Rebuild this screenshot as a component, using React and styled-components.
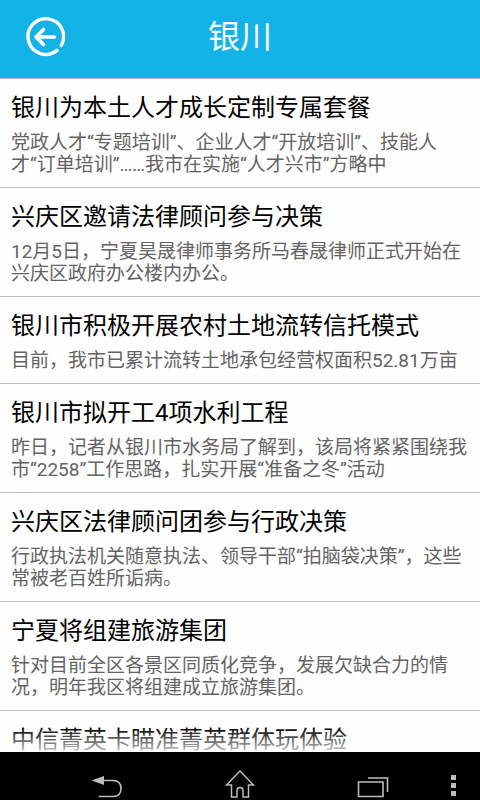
import React from 'react';
import styled, { createGlobalStyle } from 'styled-components';

const news = [
  {
    title: '银川为本土人才成长定制专属套餐',
    summary: '党政人才“专题培训”、企业人才“开放培训”、技能人才“订单培训”……我市在实施“人才兴市”方略中',
  },
  {
    title: '兴庆区邀请法律顾问参与决策',
    summary: '12月5日，宁夏昊晟律师事务所马春晟律师正式开始在兴庆区政府办公楼内办公。',
  },
  {
    title: '银川市积极开展农村土地流转信托模式',
    summary: '目前，我市已累计流转土地承包经营权面积52.81万亩',
  },
  {
    title: '银川市拟开工4项水利工程',
    summary: '昨日，记者从银川市水务局了解到，该局将紧紧围绕我市“2258”工作思路，扎实开展“准备之冬”活动',
  },
  {
    title: '兴庆区法律顾问团参与行政决策',
    summary: '行政执法机关随意执法、领导干部“拍脑袋决策”，这些常被老百姓所诟病。',
  },
  {
    title: '宁夏将组建旅游集团',
    summary: '针对目前全区各景区同质化竞争，发展欠缺合力的情况，明年我区将组建成立旅游集团。',
  },
  { title: '中信菁英卡瞄准菁英群体玩体验' },
];

const App = () => {
  return (
    <Screen>
      <GlobalStyle />
      <Header>
        <BackButton type="button" aria-label="返回">
          <svg width="40" height="40" viewBox="0 0 40 40" fill="none" stroke="#fff" strokeLinecap="round">
            <path d="M36.2 28.5A17.8 17.8 0 1 0 32 33.4" strokeWidth="3.4" />
            <path d="M29.500 20H11.500M18.500 12.500L11 20L18.500 27.500" strokeWidth="3.6" strokeLinejoin="round" />
          </svg>
        </BackButton>
        <HeaderTitle>银川</HeaderTitle>
      </Header>

      <ListArea>
        <List>
          {news.map(item => (
            <Row key={item.title}>
              <RowLink href="#">
                <RowTitle>{item.title}</RowTitle>
                {item.summary && <Summary>{item.summary}</Summary>}
              </RowLink>
            </Row>
          ))}
        </List>
        <Fade />
      </ListArea>

      <NavBar>
        <NavButton type="button" aria-label="后退">
          <svg width="32" height="24" viewBox="0 0 32 24" fill="none" stroke="#bdbdbd">
            <path d="M12 6.500H22C27 6.500 30 9.500 30 14.500C30 19.500 27 22.500 22 22.500H7.500" strokeWidth="1.6" />
            <path d="M0.500 6.500L13 2V11Z" fill="#bdbdbd" stroke="none" />
          </svg>
        </NavButton>
        <NavButton type="button" aria-label="主页">
          <svg width="32" height="30" viewBox="0 0 32 30" fill="none" stroke="#bdbdbd" strokeWidth="1.5">
            <path d="M16 3L2.5 17H7.5V29H13V22C13 18.5 19 18.5 19 22V29H24.5V17H29.5Z" />
          </svg>
        </NavButton>
        <NavButton type="button" aria-label="最近任务">
          <svg width="32" height="24" viewBox="0 0 32 24" fill="none" stroke="#bdbdbd" strokeWidth="1.6">
            <path d="M1.5 8H26V22.5H1.5Z" />
            <path d="M11 4H30.5V18" />
          </svg>
        </NavButton>
        <MenuButton type="button" aria-label="更多">
          <svg width="5" height="22" viewBox="0 0 5 22" fill="#bdbdbd">
            <rect width="5" height="5" />
            <rect y="8" width="5" height="5" />
            <rect y="16" width="5" height="5" />
          </svg>
        </MenuButton>
      </NavBar>
    </Screen>
  );
};

const GlobalStyle = createGlobalStyle`
  * {
    box-sizing: border-box;
  }
  body {
    margin: 0;
    font-family: Roboto, 'Noto Sans CJK SC', sans-serif;
  }
  button {
    border: 0;
    padding: 0;
    background: none;
    cursor: pointer;
  }
  svg {
    display: block;
  }
`;

const Screen = styled.div`
  display: flex;
  flex-direction: column;
  height: 100vh;
  background: #fefefe;
`;

const Header = styled.header`
  display: grid;
  grid-template-columns: 1fr auto 1fr;
  align-items: center;
  height: 79px;
  padding: 0 25px 4px;
  background: #13b2e7;
  border-bottom: 1px solid #a5b4bb;
  flex-shrink: 0;
`;

const BackButton = styled.button`
  justify-self: start;
`;

const HeaderTitle = styled.h1`
  margin: 0;
  color: #fff;
  font-size: 32px;
  font-weight: 400;
  line-height: 40px;
`;

const ListArea = styled.main`
  position: relative;
  flex: 1;
  min-height: 0;
  overflow: hidden;
`;

const List = styled.ul`
  margin: 0;
  padding: 0;
  list-style: none;
`;

const Row = styled.li`
  border-bottom: 1px solid #bebebe;
`;

const RowLink = styled.a`
  display: block;
  padding: 13px 11px 11px;
  color: inherit;
  text-decoration: none;
`;

const RowTitle = styled.h2`
  margin: 0 0 8px;
  color: #000;
  font-size: 24px;
  font-weight: 400;
  line-height: 32px;
`;

const Summary = styled.p`
  margin: 0;
  color: #636363;
  font-size: 19px;
  line-height: 22px;
`;

/* the list fades out just above the navigation bar */
const Fade = styled.div`
  position: absolute;
  left: 0;
  right: 0;
  bottom: 0;
  height: 24px;
  background: linear-gradient(rgba(254, 254, 254, 0), rgba(254, 254, 254, 0.8));
  pointer-events: none;
`;

const NavBar = styled.nav`
  display: grid;
  grid-template-columns: 40px repeat(3, 1fr) 40px;
  height: 48px;
  background: #000;
  flex-shrink: 0;
`;

const NavButton = styled.button`
  display: flex;
  justify-content: center;
  align-items: flex-end;
  padding-bottom: 2px;

  &:first-child {
    grid-column: 2;
  }
`;

const MenuButton = styled(NavButton)`
  justify-content: flex-start;
  padding: 0 0 3px 11px;
`;

export default App;
